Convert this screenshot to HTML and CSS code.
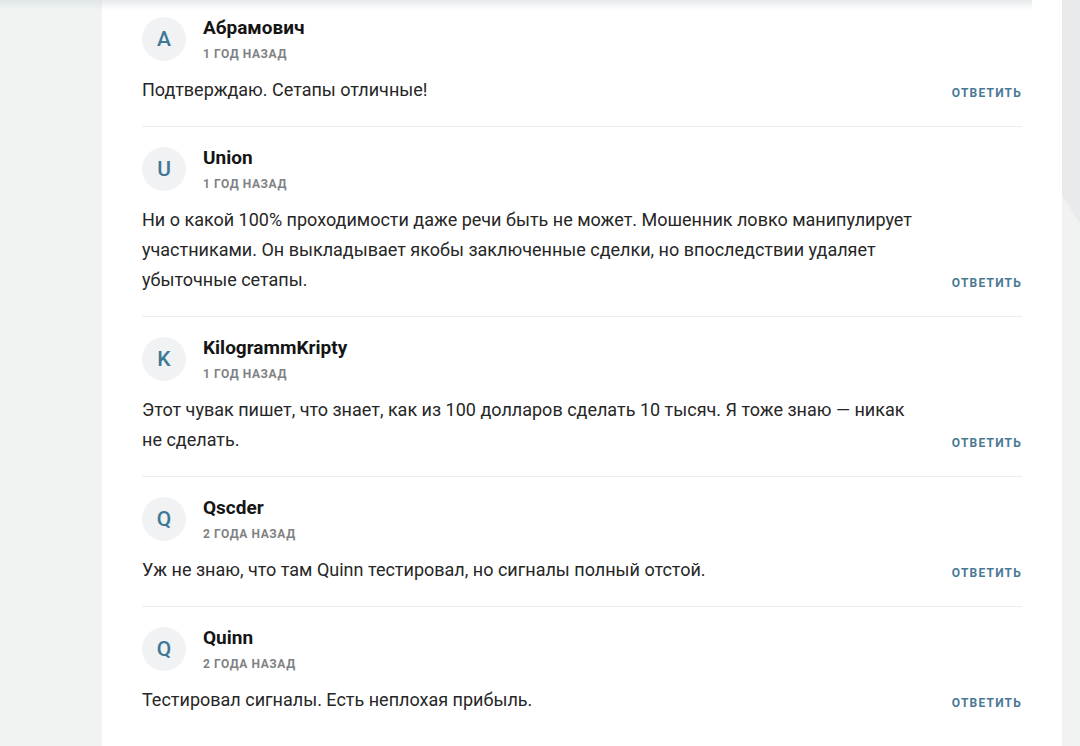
FILE: index.html
```html
<!DOCTYPE html>
<html lang="ru">
<head>
    <meta charset="UTF-8">
    <meta name="viewport" content="width=device-width, initial-scale=1.0">
    <title>Комментарии</title>
    <link rel="stylesheet" href="styles.css">
</head>
<body>
  <div class="page">
    <aside class="side-left"></aside>

    <main class="content">
      <div class="top-shade"></div>

      <ul class="comments">
        <li class="comment">
          <div class="comment-head">
            <span class="avatar">A</span>
            <div class="meta">
              <span class="author">Абрамович</span>
              <span class="date">1 год назад</span>
            </div>
          </div>
          <div class="comment-body">
            <p class="text">Подтверждаю. Сетапы отличные!</p>
            <a href="#" class="reply">Ответить</a>
          </div>
        </li>

        <li class="comment">
          <div class="comment-head">
            <span class="avatar">U</span>
            <div class="meta">
              <span class="author">Union</span>
              <span class="date">1 год назад</span>
            </div>
          </div>
          <div class="comment-body">
            <p class="text">Ни о какой 100% проходимости даже речи быть не может. Мошенник ловко манипулирует участниками. Он выкладывает якобы заключенные сделки, но впоследствии удаляет убыточные сетапы.</p>
            <a href="#" class="reply">Ответить</a>
          </div>
        </li>

        <li class="comment">
          <div class="comment-head">
            <span class="avatar">K</span>
            <div class="meta">
              <span class="author">KilogrammKripty</span>
              <span class="date">1 год назад</span>
            </div>
          </div>
          <div class="comment-body">
            <p class="text">Этот чувак пишет, что знает, как из 100 долларов сделать 10 тысяч. Я тоже знаю — никак не сделать.</p>
            <a href="#" class="reply">Ответить</a>
          </div>
        </li>

        <li class="comment">
          <div class="comment-head">
            <span class="avatar">Q</span>
            <div class="meta">
              <span class="author">Qscder</span>
              <span class="date">2 года назад</span>
            </div>
          </div>
          <div class="comment-body">
            <p class="text">Уж не знаю, что там Quinn тестировал, но сигналы полный отстой.</p>
            <a href="#" class="reply">Ответить</a>
          </div>
        </li>

        <li class="comment">
          <div class="comment-head">
            <span class="avatar">Q</span>
            <div class="meta">
              <span class="author">Quinn</span>
              <span class="date">2 года назад</span>
            </div>
          </div>
          <div class="comment-body">
            <p class="text">Тестировал сигналы. Есть неплохая прибыль.</p>
            <a href="#" class="reply">Ответить</a>
          </div>
        </li>
      </ul>
    </main>

    <aside class="side-right"></aside>
  </div>
</body>
</html>
```

FILE: styles.css
```css
html, body {
    margin: 0;
    padding: 0;
    height: 100%;
    overflow: hidden;
}

body {
    font-family: Roboto, "Noto Sans", Arial, sans-serif;
    background: #f1f3f3;
    color: #222;
}

.page {
    display: flex;
    height: 100%;
}

.side-left {
    width: 102px;
    flex-shrink: 0;
    background: #f1f3f3;
}

.side-right {
    position: relative;
    flex: 1;
    background: #f1f3f3;
}

/* darker slanted panel in the right gutter */
.side-right::before {
    content: "";
    position: absolute;
    top: 0;
    left: 0;
    right: 0;
    height: 240px;
    background: #e8eaeb;
    clip-path: polygon(0 0, 100% 0, 100% 224px, 0 195px);
}

.content {
    position: relative;
    width: 960px;
    flex-shrink: 0;
    background: #fff;
    padding: 0 40px;
    box-sizing: border-box;
}

.top-shade {
    position: absolute;
    top: 0;
    left: -102px;
    right: 30px;
    height: 10px;
    background: linear-gradient(to bottom, rgba(210, 218, 222, 0.55), rgba(255, 255, 255, 0));
    pointer-events: none;
}

.comments {
    list-style: none;
    margin: -4px 0 0 0;
    padding: 0;
}

.comment {
    padding: 20px 0 21px;
    border-top: 1px solid #ebedee;
}

.comment-head {
    display: flex;
    align-items: flex-start;
    gap: 17px;
    height: 44px;
}

.avatar {
    width: 44px;
    height: 44px;
    border-radius: 50%;
    background: #f0f2f4;
    color: #3f7895;
    font-size: 21px;
    font-weight: 500;
    display: flex;
    align-items: center;
    justify-content: center;
    flex-shrink: 0;
}

.meta {
    display: flex;
    flex-direction: column;
    margin-top: -1px;
}

.author {
    font-size: 19px;
    font-weight: 700;
    color: #151515;
    line-height: 24px;
}

.date {
    font-size: 12px;
    font-weight: 700;
    color: #7f8285;
    text-transform: uppercase;
    letter-spacing: 0.6px;
    line-height: 20px;
    margin-top: 4px;
}

.comment-body {
    display: flex;
    align-items: flex-end;
    margin-top: 14px;
}

.text {
    flex: 1;
    margin: 0;
    max-width: 780px;
    font-size: 18px;
    line-height: 30px;
    color: #262626;
}

.reply {
    margin-left: auto;
    font-size: 12px;
    font-weight: 700;
    text-transform: uppercase;
    letter-spacing: 1.2px;
    color: #4a7993;
    text-decoration: none;
    line-height: 24px;
}
```
